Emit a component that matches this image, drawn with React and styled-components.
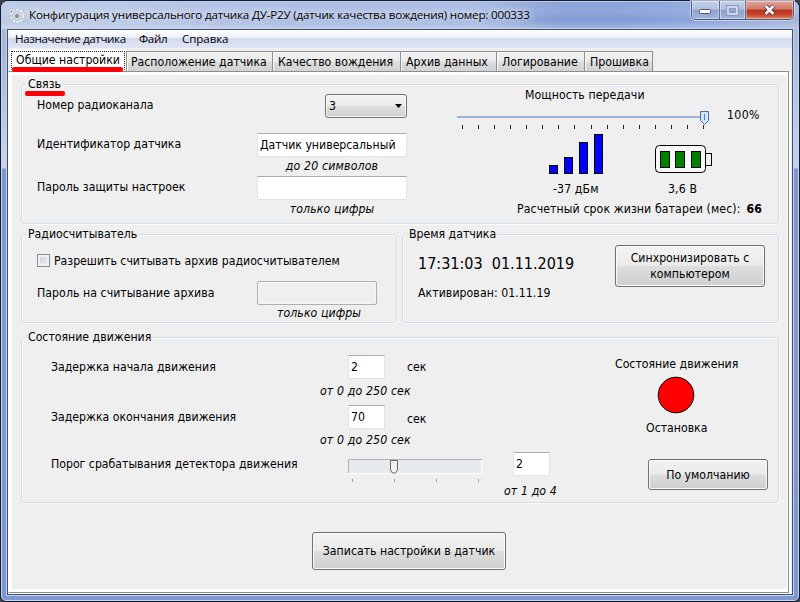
import React from "react";
import styled, { createGlobalStyle } from "styled-components";

const GlobalStyle = createGlobalStyle`
  * { box-sizing: border-box; }
  body { margin: 0; background: #3c4048; overflow: hidden; }
`;

const ui = `"DejaVu Sans Condensed", "DejaVu Sans", sans-serif`;
const chrome = `"Open Sans", sans-serif`;

/* ---------- window frame ---------- */

const Window = styled.div`
  width: 800px;
  height: 602px;
  display: flex;
  flex-direction: column;
  border: 1px solid #151c2b;
  border-radius: 8px 8px 6px 6px;
  box-shadow: inset 0 0 0 1px #c3d4f2;
  background:
    linear-gradient(to bottom, #b9c8e6 0, #a9b9dc 30px, #a8b9de 60px, #cbd6ec 165px, #cbd6ec 167px, transparent 168px) left / 8px 100% no-repeat,
    linear-gradient(to bottom, #a4b7e0 0, #a9bae0 30px, #c5d2ec 165px, #c5d2ec 167px, transparent 168px) right / 8px 100% no-repeat,
    linear-gradient(to bottom, #7a93cc, #8199d0 50%, #7d97d0);
  font: 12.2px/16px ${ui};
  color: #000;
  white-space: pre;
`;

const TitleBar = styled.div`
  height: 28px;
  flex: none;
  display: flex;
  padding-left: 7px;
  border-radius: 7px 7px 0 0;
  box-shadow: inset 0 1px 0 #b9cbef;
  background:
    linear-gradient(to bottom, rgba(255,255,255,.08), rgba(255,255,255,.12) 40%, rgba(255,255,255,0) 70%, rgba(255,255,255,.3)),
    linear-gradient(to right, #bac8e4 0, #b4c4e5 120px, #a5b8e2 300px, #a2b6e2 480px, #829bd4 555px, #7f9bd8 620px, #8ca5dc 700px, #a3b5de 800px);
`;

const TitleText = styled.div`
  margin: 5px 0 0 5px;
  flex: 1;
  font: 11.6px/18px ${chrome};
  letter-spacing: -0.18px;
  text-shadow: 0 0 6px rgba(255,255,255,.9), 0 0 10px rgba(255,255,255,.7);
`;

const AppIcon = styled.svg`
  margin-top: 6px;
  width: 16px;
  height: 16px;
`;

const Controls = styled.div`
  display: flex;
  width: 103px;
  height: 19px;
  margin-right: 5px;
  border: 1px solid #4b5876;
  border-top: 0;
  border-radius: 0 0 5px 5px;
  box-shadow: 0 0 0 1px rgba(215,226,246,.75);
  overflow: hidden;
`;

const Control = styled.div`
  width: ${(p) => p.$w}px;
  display: flex;
  align-items: center;
  justify-content: center;
  border-right: ${(p) => (p.$close ? "0" : "1px solid #5d6b8b")};
  box-shadow: inset 0 0 0 1px rgba(255,255,255,.4);
  background: ${(p) =>
    p.$close
      ? "linear-gradient(#e3a79b, #d17766 45%, #b93322 50%, #c6452e 75%, #dc8664)"
      : "linear-gradient(#c5d1ea, #b2c1e0 45%, #8da1ce 50%, #a3b5dc)"};
`;

const Client = styled.div`
  margin: 0 6px;
  height: 566px;
  border: 1px solid #465068;
  box-shadow: 0 0 0 1px #c0d0ee;
  background: #efefef;
  display: flex;
  flex-direction: column;
`;

const MenuBar = styled.div`
  height: 19px;
  flex: none;
  display: flex;
  gap: 14px;
  padding-left: 7px;
  border-bottom: 1px solid #f0f0f0;
  background: linear-gradient(#fff, #eef1f9 40%, #d3daed 48%, #e0e5f5);
  font: 11.6px/18px ${chrome};
`;

const MenuItem = styled.div`
  width: ${(p) => p.$w}px;
  letter-spacing: ${(p) => p.$ls || "-0.38px"};
`;

/* ---------- tabs ---------- */

const TabStrip = styled.div`
  height: 22px;
  flex: none;
  display: flex;
  align-items: flex-end;
  padding-left: 2px;
`;

const Tab = styled.div`
  width: ${(p) => p.$w}px;
  height: 20px;
  border: 1px solid #8b8c95;
  border-left-width: ${(p) => (p.$first ? "1px" : "0")};
  border-bottom: 0;
  box-shadow: inset 1px 1px 0 #fbfbfb;
  background: linear-gradient(#f2f2f2, #ebebeb 48%, #dddddd 52%, #d2d2d2);
  line-height: 21px;
  padding-left: ${(p) => (p.$first ? "4px" : "5px")};
`;

const ActiveTab = styled.div`
  position: relative;
  width: 116px;
  height: 22px;
  background: #fff;
  padding: 2px 1px 0 1px;
`;

const FocusRect = styled.div`
  height: 19px;
  border: 1px dotted #222;
  border-bottom-color: transparent;
  padding-left: 4px;
  line-height: 17px;
`;

const RedMark = styled.div`
  position: absolute;
  left: ${(p) => p.$x}px;
  top: ${(p) => p.$y}px;
  width: ${(p) => p.$w}px;
  height: 5px;
  border-radius: 2px;
  background: #fb0007;
  z-index: 1;
`;

const Page = styled.div`
  width: 781px;
  height: 522px;
  border: 1px solid #8b8c95;
  border-left-color: #fff;
  box-shadow: 2px 1px 0 #fff;
  background: #fff;
  padding: 3px 1px 3px 3px;
`;

const PageBody = styled.div`
  height: 514px;
  padding: 9px 0 0 9px;
  background: #efefef;
  display: flex;
  flex-direction: column;
`;

/* ---------- group boxes ---------- */

const Group = styled.section`
  width: ${(p) => p.$w}px;
  height: ${(p) => p.$h}px;
  flex: none;
  border: 1px solid #d3dfe7;
  border-radius: 3px;
  box-shadow: inset 1px 1px 0 #fafafa, 1px 1px 0 #fafafa;
`;

const Legend = styled.div`
  position: relative;
  width: fit-content;
  height: 16px;
  margin: -9px 0 -1px 4px;
  padding: 0 1px 0 2px;
  background: #efefef;
`;

const Columns = styled.div`
  display: flex;
`;

const GroupRow = styled.div`
  display: flex;
  gap: 5px;
  margin: 10px 0 14px;
`;

const Text = styled.div`
  line-height: 16px;
  letter-spacing: ${(p) => p.$ls || "0"};
`;

const Hint = styled(Text)`
  font-style: oblique;
  letter-spacing: ${(p) => p.$ls || "0.14px"};
`;

const Field = styled.div`
  width: ${(p) => p.$w}px;
  height: 24px;
  border: 1px solid #dde4ec;
  border-top-color: #a9abb2;
  background: #fff;
  padding: 3px 0 0 2px;
`;

const DisabledField = styled(Field)`
  border: 1px solid #afafaf;
  border-radius: 2px;
  background: #efefef;
  box-shadow: inset 0 0 0 1px #f7f7f7;
`;

const Select = styled.div`
  width: 82px;
  height: 24px;
  margin-left: 68px;
  display: flex;
  align-items: center;
  justify-content: space-between;
  padding: 0 4px 0 3px;
  border: 1px solid #707070;
  border-radius: 3px;
  box-shadow: inset 0 0 0 1px #f8f8f8;
  background: linear-gradient(#f2f2f2, #ebebeb 48%, #dddddd 52%, #cfcfcf);
`;

const Button = styled.button`
  width: ${(p) => p.$w}px;
  height: ${(p) => p.$h}px;
  padding: 0;
  border: 1px solid #707070;
  border-radius: 3px;
  box-shadow: inset 0 0 0 1px #fafafa;
  background: linear-gradient(#f2f2f2, #ebebeb 48%, #dddddd 52%, #cfcfcf);
  font: 12.2px/16px ${ui};
  color: #000;
  text-align: center;
  white-space: pre;
`;

/* ---------- connection group ---------- */

const LinkForm = styled.div`
  width: 385px;
  padding: 3px 0 0 15px;
  display: grid;
  grid-template-columns: 220px 150px;
  grid-template-rows: 39px 24px 19px 24px 18px;
`;

const FormLabel = styled(Text)`
  padding-top: ${(p) => p.$top || 3}px;
`;

const LinkHint = styled(Hint)`
  grid-column: 2;
  text-align: center;
  padding-top: 1px;
`;

const Signal = styled.div`
  width: 370px;
  margin-left: 50px;
  margin-top: -4px;
`;

const SignalTitle = styled(Text)`
  margin-left: 68px;
`;

const PowerRow = styled.div`
  display: flex;
  margin-top: 7px;
  height: 24px;
`;

const PowerSlider = styled.svg`
  width: 258px;
  height: 24px;
`;

const PowerValue = styled(Text)`
  margin: -3px 0 0 12px;
  letter-spacing: 0.4px;
`;

const Meters = styled.div`
  display: grid;
  grid-template-columns: 106px 58px;
  padding-left: 92px;
  height: 67px;
`;

const Meter = styled.div`
  display: flex;
  flex-direction: column;
`;

const BarsIcon = styled.svg`
  width: 56px;
  height: 42px;
`;

const BatteryIcon = styled.svg`
  width: 58px;
  height: 32px;
  margin-top: 10px;
`;

const MeterText = styled(Text)`
  margin: 5px 0 0 ${(p) => p.$left}px;
  letter-spacing: 0.12px;
`;

const LifeRow = styled.div`
  display: flex;
  width: 305px;
  padding-left: 60px;
  justify-content: space-between;
`;

const LifeValue = styled.b`
  letter-spacing: 0.1px;
`;

/* ---------- reader group ---------- */

const CheckRow = styled.div`
  display: flex;
  gap: 4px;
  margin: 12px 0 0 15px;
`;

const CheckBox = styled.div`
  width: 13px;
  height: 13px;
  margin-top: 1px;
  border: 1px solid #8a8b8f;
  background: linear-gradient(135deg, #c9ccd2, #f5f5f6);
  box-shadow: inset 0 0 0 2px #f1f1f1;
`;

const ReaderRow = styled.div`
  display: grid;
  grid-template-columns: 220px 120px;
  margin: 12px 0 0 15px;
`;

const ReaderHint = styled(Hint)`
  margin-left: 255px;
`;

/* ---------- clock group ---------- */

const ClockInfo = styled.div`
  width: 212px;
  padding: 11px 0 0 15px;
`;

const Clock = styled.div`
  font-size: 16px;
  line-height: 24px;
  margin-bottom: 9px;
`;

const ClockAction = styled.div`
  padding-top: 4px;
`;

/* ---------- motion group ---------- */

const MotionForm = styled.div`
  width: 585px;
  padding: 11px 0 0 29px;
`;

const MotionRow = styled.div`
  display: grid;
  grid-template-columns: 297px 59px 1fr;
  height: ${(p) => p.$h}px;
`;

const Unit = styled(Text)`
  padding-top: ${(p) => p.$top}px;
`;

const RangeHint = styled(Hint)`
  margin-left: 269px;
  height: ${(p) => p.$h}px;
`;

const ThresholdRow = styled.div`
  display: grid;
  grid-template-columns: 297px 165px 38px;
  height: 31px;
`;

const ThresholdSlider = styled.svg`
  width: 136px;
  height: 30px;
  margin-top: 5px;
`;

const ThresholdHint = styled(Hint)`
  margin-left: 453px;
`;

const MotionState = styled.div`
  width: 162px;
  padding: 12px 0 0 8px;
  display: flex;
  flex-direction: column;
`;

const Lamp = styled.svg`
  width: 38px;
  height: 38px;
  margin: 4px 0 0 42px;
`;

const StateText = styled(Text)`
  margin: 6px 0 23px 31px;
`;

const DefaultsSlot = styled.div`
  padding-left: 33px;
`;

const Footer = styled.div`
  padding: 29px 0 0 291px;
`;

const powerTicks = Array.from({ length: 16 }, (_, i) => Math.round(5 + i * 16.07));
const bars = [[1, 31, 8], [16, 23, 16], [31, 8, 31], [46, 0, 39]];

export default function App() {
  return (
    <>
      <GlobalStyle />
      <Window>
        <TitleBar>
          <AppIcon viewBox="0 0 16 16">
            <circle cx="9" cy="9" r="5.2" fill="#dfe3ea" stroke="#f8f9fb" strokeWidth="3" strokeDasharray="2 1.3" />
            <circle cx="9" cy="9" r="4.7" fill="#d5dae2" stroke="#9aa3b2" strokeWidth=".6" />
            <circle cx="9" cy="9" r="2" fill="#7d899d" />
            <circle cx="3.5" cy="4.5" r="2.6" fill="#eef0f4" stroke="#a8b0be" strokeWidth=".8" strokeDasharray="1.3 .8" />
            <circle cx="3.5" cy="4.5" r=".9" fill="#69758c" />
          </AppIcon>
          <TitleText>Конфигурация универсального датчика ДУ-Р2У (датчик качества вождения) номер: 000333</TitleText>
          <Controls>
            <Control $w={28}>
              <svg width="14" height="7" viewBox="0 0 14 7">
                <rect x="1.5" y="2.5" width="11" height="4" rx="1" fill="#fff" stroke="#515a70" />
              </svg>
            </Control>
            <Control $w={27}>
              <svg width="13" height="11" viewBox="0 0 13 11">
                <rect x="2" y="2" width="9" height="7" fill="none" stroke="#8492b2" strokeWidth="4" />
                <rect x="2" y="2" width="9" height="7" fill="none" stroke="#ccd6ea" strokeWidth="2.2" />
              </svg>
            </Control>
            <Control $w={47} $close>
              <svg width="13" height="12" viewBox="0 0 13 12">
                <path d="M2.5 2 L10.5 10 M10.5 2 L2.5 10" stroke="#5c4650" strokeWidth="4.4" />
                <path d="M2.7 2.2 L10.3 9.8 M10.3 2.2 L2.7 9.8" stroke="#fff" strokeWidth="2.6" />
              </svg>
            </Control>
          </Controls>
        </TitleBar>

        <Client>
          <MenuBar>
            <MenuItem $w={110}>Назначение датчика</MenuItem>
            <MenuItem $w={29}>Файл</MenuItem>
            <MenuItem $w={50} $ls="-0.1px">Справка</MenuItem>
          </MenuBar>

          <TabStrip>
            <ActiveTab>
              <FocusRect>Общие настройки</FocusRect>
              <RedMark $x={2} $y={18} $w={111} />
            </ActiveTab>
            <Tab $w={147} $first>Расположение датчика</Tab>
            <Tab $w={128}>Качество вождения</Tab>
            <Tab $w={96}>Архив данных</Tab>
            <Tab $w={88}>Логирование</Tab>
            <Tab $w={68}>Прошивка</Tab>
          </TabStrip>

          <Page>
            <PageBody>
              <Group $w={758} $h={140}>
                <Legend>
                  Связь
                  <RedMark $x={-1} $y={15} $w={40} />
                </Legend>
                <Columns>
                  <LinkForm>
                    <FormLabel>Номер радиоканала</FormLabel>
                    <Select>
                      <span>3</span>
                      <svg width="7" height="4" viewBox="0 0 7 4"><path d="M0 0H7L3.5 4Z" /></svg>
                    </Select>
                    <FormLabel>Идентификатор датчика</FormLabel>
                    <Field $w={150}>Датчик универсальный</Field>
                    <LinkHint $ls="0.18px">до 20 символов</LinkHint>
                    <FormLabel $ls="0.04px">Пароль защиты настроек</FormLabel>
                    <Field $w={150} />
                    <LinkHint>только цифры</LinkHint>
                  </LinkForm>

                  <Signal>
                    <SignalTitle $ls="0.08px">Мощность передачи</SignalTitle>
                    <PowerRow>
                      <PowerSlider viewBox="0 0 258 24">
                        <rect x="0" y="6" width="247" height="2" fill="#9db6d8" />
                        {powerTicks.map((x) => (
                          <rect key={x} x={x} y="15" width="1" height="4" fill="#222" />
                        ))}
                        <path d="M243.5 1.5H251.5V10.5L247.5 14.5L243.5 10.5Z" fill="#d5e6f7" stroke="#3f6fa5" />
                        <rect x="247" y="4" width="1" height="6" fill="#4c7db5" />
                      </PowerSlider>
                      <PowerValue>100%</PowerValue>
                    </PowerRow>
                    <Meters>
                      <Meter>
                        <BarsIcon viewBox="0 0 56 42">
                          {bars.map(([x, y, h]) => (
                            <rect key={x} x={x - 0.5} y={y + 0.5} width="8" height={h} fill="#00f" stroke="#000" />
                          ))}
                        </BarsIcon>
                        <MeterText $left={4}>-37 дБм</MeterText>
                      </Meter>
                      <Meter>
                        <BatteryIcon viewBox="0 0 58 32">
                          <rect x="0.5" y="1.5" width="50" height="27" rx="4" fill="#f6f6f6" stroke="#000" />
                          <rect x="50.5" y="9.5" width="6" height="12" fill="#f0f0f0" stroke="#000" />
                          {[5.5, 20.5, 36.5].map((x) => (
                            <rect key={x} x={x} y="7.5" width="9" height="16" fill="#008000" stroke="#000" />
                          ))}
                        </BatteryIcon>
                        <MeterText $left={13}>3,6 В</MeterText>
                      </Meter>
                    </Meters>
                    <LifeRow>
                      <Text $ls="0.1px">Расчетный срок жизни батареи (мес):</Text>
                      <LifeValue>66</LifeValue>
                    </LifeRow>
                  </Signal>
                </Columns>
              </Group>

              <GroupRow>
                <Group $w={376} $h={89}>
                  <Legend>Радиосчитыватель</Legend>
                  <CheckRow>
                    <CheckBox />
                    <Text>Разрешить считывать архив радиосчитывателем</Text>
                  </CheckRow>
                  <ReaderRow>
                    <FormLabel $top={4} $ls="0.06px">Пароль на считывание архива</FormLabel>
                    <DisabledField $w={120} />
                  </ReaderRow>
                  <ReaderHint $ls="0.08px">только цифры</ReaderHint>
                </Group>
                <Group $w={377} $h={89}>
                  <Legend>Время датчика</Legend>
                  <Columns>
                    <ClockInfo>
                      <Clock>17:31:03  01.11.2019</Clock>
                      <Text $ls="0.06px">Активирован: 01.11.19</Text>
                    </ClockInfo>
                    <ClockAction>
                      <Button $w={150} $h={42}>{"Синхронизировать с\nкомпьютером"}</Button>
                    </ClockAction>
                  </Columns>
                </Group>
              </GroupRow>

              <Group $w={758} $h={166}>
                <Legend>Состояние движения</Legend>
                <Columns>
                  <MotionForm>
                    <MotionRow $h={28}>
                      <FormLabel $top={4}>Задержка начала движения</FormLabel>
                      <Field $w={37}>2</Field>
                      <Unit $top={4}>сек</Unit>
                    </MotionRow>
                    <RangeHint $h={22}>от 0 до 250 сек</RangeHint>
                    <MotionRow $h={27}>
                      <FormLabel $top={4}>Задержка окончания движения</FormLabel>
                      <Field $w={37}>70</Field>
                      <Unit $top={6}>сек</Unit>
                    </MotionRow>
                    <RangeHint $h={20}>от 0 до 250 сек</RangeHint>
                    <ThresholdRow>
                      <FormLabel $top={4}>Порог срабатывания детектора движения</FormLabel>
                      <ThresholdSlider viewBox="0 0 136 30">
                        <rect x="0.5" y="2.5" width="133" height="14" fill="#e7eaea" stroke="#fff" />
                        <path d="M0.5 16V2.5H134" fill="none" stroke="#aeb2b5" />
                        {[4, 46, 88, 130].map((x) => (
                          <rect key={x} x={x} y="22" width="1" height="3" fill="#a0a0a0" />
                        ))}
                        <path d="M42.5 3.5H49.5V13L47.5 16H44.5L42.5 13Z" fill="#f2f2f2" stroke="#686868" strokeLinejoin="round" />
                      </ThresholdSlider>
                      <Field $w={37}>2</Field>
                    </ThresholdRow>
                    <ThresholdHint $ls="0.12px">от 1 до 4</ThresholdHint>
                  </MotionForm>

                  <MotionState>
                    <Text>Состояние движения</Text>
                    <Lamp viewBox="0 0 38 38">
                      <circle cx="19" cy="19" r="17.8" fill="#f00" stroke="#000" />
                    </Lamp>
                    <StateText>Остановка</StateText>
                    <DefaultsSlot>
                      <Button $w={120} $h={31}>По умолчанию</Button>
                    </DefaultsSlot>
                  </MotionState>
                </Columns>
              </Group>

              <Footer>
                <Button $w={194} $h={38}>Записать настройки в датчик</Button>
              </Footer>
            </PageBody>
          </Page>
        </Client>
      </Window>
    </>
  );
}
